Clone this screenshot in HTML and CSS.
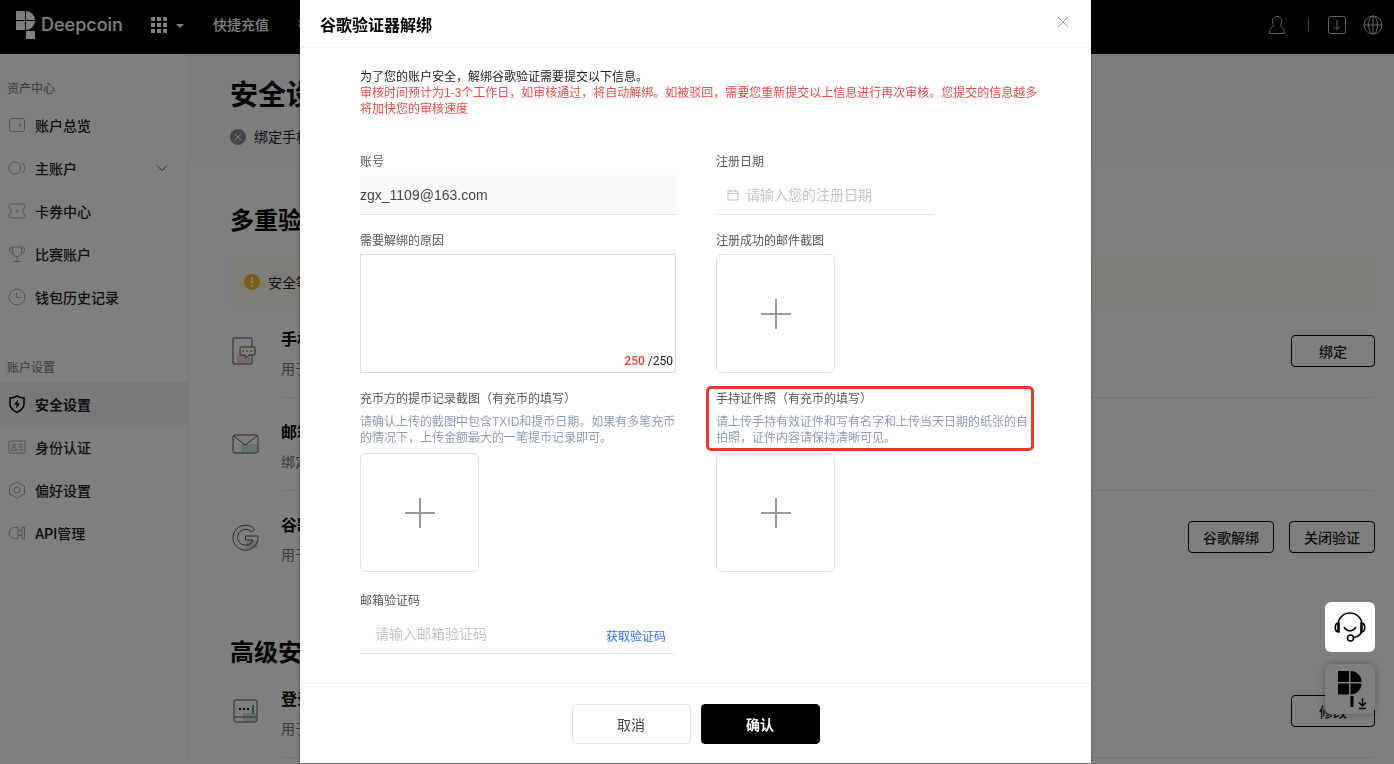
FILE: index.html
```html
<!DOCTYPE html>
<html lang="zh-CN">
<head>
  <meta charset="UTF-8">
  <meta name="viewport" content="width=device-width, initial-scale=1.0">
  <title>谷歌验证器解绑</title>
  <link rel="stylesheet" href="styles.css">
</head>
<body>
  <header class="topbar">
    <a class="logo" href="#">
      <svg width="20" height="30" viewBox="0 0 20 30" fill="currentColor">
        <path d="M0 1h9v9H0zM10 1a9 9 0 0 1 9 9h-9zM0 11h9v9H0zM10 11h9a9 9 0 0 1-9 9zM10 21h9v8h-9z"/>
      </svg>
      <span>Deepcoin</span>
    </a>
    <button class="apps" aria-label="apps">
      <svg width="33" height="16" viewBox="0 0 33 16" fill="currentColor">
        <path d="M0 0h4v4H0zM6 0h4v4H6zM12 0h4v4h-4zM0 6h4v4H0zM6 6h4v4H6zM12 6h4v4h-4zM0 12h4v4H0zM6 12h4v4H6zM12 12h4v4h-4zM25 7h8l-4 4z"/>
      </svg>
    </button>
    <nav class="topnav">
      <a href="#">快捷充值</a>
      <a href="#">行情</a>
    </nav>
    <div class="tools">
      <button aria-label="user">
        <svg width="18" height="20" viewBox="0 0 18 20"><path d="M6 10.500C3 7 4 1.500 9 1.500S15 7 12 10.500c3 1.500 4.500 4 4.500 8h-15c0-4 1.500-6.500 4.500-8z"/></svg>
      </button>
      <i class="bar"></i>
      <button aria-label="download">
        <svg width="20" height="20" viewBox="0 0 20 20"><rect x="1.500" y="1.500" width="17" height="17" rx="2"/><path d="M10 5v9.500M6.500 11l3.500 3.500 3.500-3.500"/></svg>
      </button>
      <button aria-label="language">
        <svg width="20" height="20" viewBox="0 0 20 20"><circle cx="10" cy="10" r="9"/><ellipse cx="10" cy="10" rx="4.500" ry="9"/><path d="M1 10h18M10 1v18"/></svg>
      </button>
    </div>
  </header>

  <div class="layout">
    <aside class="sidebar">
      <h4>资产中心</h4>
      <a href="#">
        <svg width="18" height="18" viewBox="0 0 18 18"><rect x="1.500" y="2.500" width="15" height="13" rx="2"/><circle cx="12" cy="9" r="1"/></svg>
        账户总览
      </a>
      <a href="#">
        <svg width="18" height="18" viewBox="0 0 18 18"><circle cx="7" cy="9" r="6"/><path d="M14 3.500c3.500 3 3.500 8 0 11"/></svg>
        主账户
        <svg class="arrow" width="12" height="8" viewBox="0 0 12 8"><path d="M1 1.500l5 5 5-5"/></svg>
      </a>
      <a href="#">
        <svg width="18" height="18" viewBox="0 0 18 18"><path d="M2.500 2h13c1 0 1.500.5 1.500 1.500v2c-3 1.500-3 5.500 0 7v2c0 1-.5 1.500-1.500 1.500h-13C1.500 16 1 15.500 1 14.500v-2c3-1.500 3-5.500 0-7v-2C1 2.500 1.500 2 2.500 2z"/><circle cx="9" cy="9" r="1"/></svg>
        卡券中心
      </a>
      <a href="#">
        <svg width="18" height="18" viewBox="0 0 18 18"><path d="M4.500 2h9v5c0 6-9 6-9 0zM4.500 3H1.500c0 3 .5 5 3.500 5.500M13.500 3h3c0 3-.5 5-3.500 5.500M9 12v4.500M5 16.500h8"/></svg>
        比赛账户
      </a>
      <a href="#">
        <svg width="18" height="18" viewBox="0 0 18 18"><circle cx="9" cy="9" r="8"/><path d="M8.500 4.500v5h5"/></svg>
        钱包历史记录
      </a>
      <h4 class="second">账户设置</h4>
      <a class="active" href="#">
        <svg width="18" height="18" viewBox="0 0 18 18"><path d="M9 1c2.500 1.500 4.500 2 7 2v6c0 4-3 6.500-7 8.500C5 15.500 2 13 2 9V3c2.500 0 4.500-.5 7-2z"/><path class="bolt" d="M10 4.500L6 9.500h2.500L8 13.500l4-5H9.500z"/></svg>
        安全设置
      </a>
      <a href="#">
        <svg width="18" height="18" viewBox="0 0 18 18"><rect x="1" y="3" width="16" height="12" rx="1"/><circle cx="6" cy="7.500" r="1.500"/><path d="M3.500 12.500c0-4 5-4 5 0zM10.500 6.500H15M10.500 9H15M10.500 11.500H15"/></svg>
        身份认证
      </a>
      <a href="#">
        <svg width="18" height="18" viewBox="0 0 18 18"><path d="M9 1l7.500 4v8L9 17l-7.500-4V5z"/><circle cx="9" cy="9" r="3"/></svg>
        偏好设置
      </a>
      <a href="#">
        <svg width="18" height="18" viewBox="0 0 18 18"><path d="M10 3.500H6.500a5.500 5.500 0 0 0 0 11H10zM1 9h1M10 6.500h3M10 11.500h3M14 3h2.500v12H14z"/></svg>
        API管理
      </a>
    </aside>

    <main class="content">
      <section class="hero">
        <h1>安全设置</h1>
        <p>
          <svg width="16" height="16" viewBox="0 0 16 16"><circle cx="8" cy="8" r="8" fill="#8c8c8c" stroke="none"/><path d="M5 5l6 6M11 5l-6 6" stroke="#fff"/></svg>
          绑定手机
        </p>
      </section>

      <section class="group">
        <h2>多重验证</h2>
        <div class="alert">
          <svg width="16" height="16" viewBox="0 0 16 16"><circle cx="8" cy="8" r="8" fill="#f5c02c" stroke="none"/><path d="M8 3v6.500M8 11v2" stroke="#fff" stroke-width="1.600"/></svg>
          安全等级
        </div>
        <div class="method">
          <svg class="pic" width="28" height="30" viewBox="0 0 28 30"><path d="M6 18h13v9H6z" fill="#f3d5c3" stroke="none"/><rect x="2" y="2" width="19" height="26" rx="1"/><path d="M10 11h13a1 1 0 0 1 1 1v6a1 1 0 0 1-1 1h-5l-3 3-1-3h-4a1 1 0 0 1-1-1v-6a1 1 0 0 1 1-1z" fill="#fff"/><path d="M11 14h2v2h-2zM15 14h2v2h-2zM19 14h2v2h-2z" fill="#f5a623" stroke="none"/></svg>
          <div class="text">
            <h3>手机验证</h3>
            <p>用于登录</p>
          </div>
          <div class="line-actions"><button>绑定</button></div>
        </div>
        <div class="method">
          <svg class="pic" width="28" height="30" viewBox="0 0 28 30"><path d="M10 15h16v8H10z" fill="#cfe5da" stroke="none"/><rect x="2" y="6" width="25" height="18" rx="2"/><path d="M3 7l11 9L26 7"/></svg>
          <div class="text">
            <h3>邮箱验证</h3>
            <p>绑定邮箱</p>
          </div>
        </div>
        <div class="method last">
          <svg class="pic" width="28" height="30" viewBox="0 0 28 30"><path d="M15 19h12v7H15z" fill="#c5dcf5" stroke="none"/><path d="M23.500 7A12.500 12.500 0 1 0 27 15.500V14H14.500v4h7.500a8 8 0 1 1-1.500-8z"/></svg>
          <div class="text">
            <h3>谷歌验证</h3>
            <p>用于登录</p>
          </div>
          <div class="line-actions"><button>谷歌解绑</button><button>关闭验证</button></div>
        </div>
      </section>

      <section class="group advanced">
        <h2>高级安全</h2>
        <div class="method">
          <svg class="pic" width="28" height="30" viewBox="0 0 28 30"><path d="M12 17h13v8H12z" fill="#c9e3d1" stroke="none"/><rect x="3" y="4" width="23" height="22" rx="2"/><path d="M3 21h23"/><path d="M8 13h2M12 13h2M16 13h2" stroke="#111" stroke-width="2"/><path d="M22 9v9" stroke="#4fae78" stroke-width="2"/></svg>
          <div class="text">
            <h3>登录密码</h3>
            <p>用于登录</p>
          </div>
          <div class="line-actions"><button>修改</button></div>
        </div>
      </section>
    </main>
  </div>

  <button class="float app-download" aria-label="app">
    <svg width="50" height="50" viewBox="0 0 50 50"><path d="M13 7h11v11H13zM25.500 7A11 11 0 0 1 36.500 18h-11zM13 19.500h11v11H13zM25.500 19.500h11a11 11 0 0 1-11 11zM25.500 32h3v11h-3z"/><rect x="29" y="31" width="17" height="17" rx="3" fill="#fff"/><path d="M37.500 34v7M34 38.500l3.500 3.500 3.500-3.500M34 44.500h7" fill="none" stroke="#000" stroke-width="1.500"/></svg>
  </button>

  <div class="overlay">
    <div class="modal" role="dialog" aria-labelledby="modal-title">
      <div class="modal-header">
        <h2 id="modal-title">谷歌验证器解绑</h2>
        <button class="close" aria-label="close">
          <svg width="12" height="12" viewBox="0 0 12 12"><path d="M1 1l10 10M11 1L1 11"/></svg>
        </button>
      </div>

      <form class="modal-body">
        <div class="intro">
          <p>为了您的账户安全，解绑谷歌验证需要提交以下信息。</p>
          <p class="warn">审核时间预计为1-3个工作日，如审核通过，将自动解绑。如被驳回，需要您重新提交以上信息进行再次审核。您提交的信息越多将加快您的审核速度</p>
        </div>

        <div class="columns">
          <div class="column">
            <div class="field">
              <label for="account">账号</label>
              <input class="line filled" id="account" type="text" value="zgx_1109@163.com" readonly>
            </div>
            <div class="field">
              <label for="reason">需要解绑的原因</label>
              <div class="area">
                <textarea id="reason"></textarea>
                <span class="count"><b>250</b> /250</span>
              </div>
            </div>
            <div class="field">
              <label for="record">充币方的提币记录截图（有充币的填写）</label>
              <p class="help">请确认上传的截图中包含TXID和提币日期。如果有多笔充币的情况下，上传金额最大的一笔提币记录即可。</p>
              <button class="upload" id="record" type="button"><svg width="32" height="32" viewBox="0 0 32 32"><path d="M16 1v30M1 16h30"/></svg></button>
            </div>
            <div class="field verify">
              <label for="code">邮箱验证码</label>
              <div class="line code">
                <input id="code" type="text" placeholder="请输入邮箱验证码">
                <button type="button">获取验证码</button>
              </div>
            </div>
          </div>

          <div class="column">
            <div class="field">
              <label for="date">注册日期</label>
              <div class="line date">
                <svg width="12" height="12" viewBox="0 0 12 12"><rect x="1" y="2" width="10" height="9"/><path d="M1 4.500h10M3.500 1v2M8.500 1v2"/></svg>
                <input id="date" type="text" placeholder="请输入您的注册日期">
              </div>
            </div>
            <div class="field">
              <label for="mail">注册成功的邮件截图</label>
              <button class="upload" id="mail" type="button"><svg width="32" height="32" viewBox="0 0 32 32"><path d="M16 1v30M1 16h30"/></svg></button>
            </div>
            <div class="field">
              <div class="highlight">
                <label for="photo">手持证件照（有充币的填写）</label>
                <p class="help">请上传手持有效证件和写有名字和上传当天日期的纸张的自拍照，证件内容请保持清晰可见。</p>
              </div>
              <button class="upload" id="photo" type="button"><svg width="32" height="32" viewBox="0 0 32 32"><path d="M16 1v30M1 16h30"/></svg></button>
            </div>
          </div>
        </div>
      </form>

      <div class="modal-footer">
        <button class="cancel">取消</button>
        <button class="confirm">确认</button>
      </div>
    </div>
  </div>

  <button class="float service" aria-label="service">
    <svg width="36" height="34" viewBox="0 0 36 34"><path d="M6 22V15a12 12 0 0 1 24 0v4c0 6-4 8-9 9"/><path d="M7 13c-5 0-5 9 0 9zM29 13c5 0 5 9 0 9z"/><path d="M12 17c3 5 9 5 12 0"/><circle cx="18.500" cy="28" r="3"/></svg>
  </button>
</body>
</html>
```
FILE: styles.css
```css
* {
  box-sizing: border-box;
}
body {
  margin: 0;
  height: 100vh;
  overflow: hidden;
  font-family: "Liberation Sans", "Noto Sans CJK SC", sans-serif;
  font-size: 14px;
  color: #1a1c22;
  background: #fff;
}
h1, h2, h3, h4, p {
  margin: 0;
}
a {
  color: inherit;
  text-decoration: none;
}
button, input, textarea {
  font: inherit;
  color: inherit;
  margin: 0;
  padding: 0;
  border: 0;
  background: none;
}
button {
  cursor: pointer;
}
svg {
  display: block;
  flex: none;
  fill: none;
  stroke: currentColor;
}

/* Header */
.topbar {
  display: flex;
  align-items: center;
  height: 54px;
  padding: 0 11px 4px 16px;
  background: #000;
  color: #fff;
}
.logo {
  display: flex;
  align-items: center;
  gap: 5px;
  width: 135px;
  font: 500 18px/24px Inter, sans-serif;
}
.logo svg, .apps svg {
  fill: currentColor;
  stroke: none;
}
.topnav {
  display: flex;
  gap: 29px;
  margin-left: 29px;
  font-weight: 500;
  line-height: 20px;
}
.tools {
  display: flex;
  align-items: center;
  margin-left: auto;
  gap: 16px;
  color: #c8c8c8;
}
.bar {
  width: 1px;
  height: 14px;
  margin: 0 2px 0 6px;
  background: #888;
}

/* Sidebar */
.layout {
  display: flex;
}
.sidebar {
  flex: none;
  width: 189px;
  padding-top: 25px;
  border-right: 1px solid #f2f2f2;
}
.sidebar h4 {
  padding-left: 7px;
  margin-bottom: 4px;
  font-size: 12px;
  font-weight: 400;
  line-height: 20px;
  color: #777;
}
.sidebar .second {
  margin-top: 40px;
}
.sidebar a {
  display: flex;
  align-items: center;
  gap: 9px;
  height: 43px;
  padding: 0 20px 0 8px;
  font-family: Roboto, "Noto Sans CJK SC", sans-serif;
  font-weight: 500;
}
.sidebar svg {
  color: #aaa;
}
.sidebar .arrow {
  margin-left: auto;
  color: #555;
}
.sidebar .active {
  font-weight: 700;
  background: #f2f2f2;
}
.sidebar .active svg {
  color: #000;
  stroke-width: 1.500;
}
.sidebar .bolt {
  fill: #000;
  stroke: none;
}

/* Page content */
.content {
  flex: 1;
}
.hero {
  height: 111px;
  padding: 22px 0 0 41px;
  background: #fafafa;
}
.hero h1 {
  font-size: 28px;
  line-height: 40px;
  color: #000;
}
.hero p {
  display: flex;
  align-items: center;
  gap: 8px;
  margin-top: 11px;
  line-height: 20px;
}
.group {
  padding: 44px 19px 0 41px;
}
.group h2 {
  font-size: 24px;
  line-height: 24px;
  color: #000;
}
.alert {
  display: flex;
  align-items: center;
  gap: 8px;
  height: 47px;
  margin-top: 25px;
  padding-left: 14px;
  background: #fffaf0;
}
.method {
  display: flex;
  align-items: flex-start;
  position: relative;
  height: 93px;
  padding-top: 23px;
}
.method::after {
  content: "";
  position: absolute;
  left: 51px;
  right: 0;
  bottom: 0;
  border-bottom: 1px solid #ebebeb;
}
.method.last::after {
  display: none;
}
.pic {
  margin: 8px 22px 0 1px;
  color: #555;
}
.method h3 {
  font-size: 16px;
  line-height: 24px;
  color: #000;
}
.method p {
  margin-top: 7px;
  line-height: 20px;
  color: #777;
}
.line-actions {
  display: flex;
  gap: 15px;
  margin: 7px 0 0 auto;
}
.line-actions button {
  min-width: 84px;
  height: 32px;
  padding: 0 14px;
  border: 1px solid #000;
  border-radius: 4px;
  font-weight: 500;
}
.advanced {
  padding-top: 57px;
}

/* Floating buttons */
.float {
  position: fixed;
  right: 19px;
  width: 50px;
  height: 50px;
  border-radius: 6px;
  background: #fff;
}
.app-download {
  bottom: 50px;
  box-shadow: 0 0 8px rgba(0, 0, 0, 0.3);
}
.app-download svg {
  fill: #000;
  stroke: none;
}
.service {
  bottom: 112px;
  display: flex;
  align-items: center;
  justify-content: center;
  color: #000;
}
.service svg {
  stroke-width: 1.600;
}

/* Modal */
.overlay {
  position: fixed;
  inset: 0;
  display: flex;
  justify-content: center;
  align-items: flex-start;
  padding-right: 3px;
  background: rgba(0, 0, 0, 0.5);
}
.modal {
  width: 791px;
  max-width: 100%;
  background: #fff;
  box-shadow: 0 0 3px rgba(0, 0, 0, 0.4);
}
.modal-header {
  display: flex;
  justify-content: space-between;
  padding: 14px 22px 9px 20px;
  border-bottom: 1px solid #f0f0f0;
}
.modal-header h2 {
  font-size: 16px;
  line-height: 24px;
  color: #000;
}
.close {
  height: 16px;
  color: #999;
}
.modal-body {
  padding: 21px 49px 29px 60px;
  font-size: 12px;
  line-height: 16px;
}
.warn {
  color: #ec4b45;
}
.columns {
  display: grid;
  grid-template-columns: 1fr 1fr;
  gap: 40px;
  max-width: 672px;
  margin-top: 37px;
}
.column {
  display: flex;
  flex-direction: column;
  gap: 18px;
}
.field label {
  display: block;
  margin-bottom: 5px;
  color: #54565b;
}
.verify {
  margin-top: 3px;
}
.line {
  display: flex;
  align-items: center;
  width: 100%;
  height: 40px;
  border-bottom: 1px solid #dfe5ec;
  font-size: 14px;
}
.line input {
  flex: 1;
  min-width: 0;
}
.filled {
  background: #fafafa;
  color: #444;
}
.date {
  width: 218px;
  padding-left: 11px;
  gap: 7px;
  color: #c0c4cc;
}
.code {
  padding: 0 10px 0 15px;
}
.code button {
  align-self: flex-end;
  padding-bottom: 8px;
  font-size: 12px;
  line-height: 16px;
  color: #2d6ff5;
}
::placeholder {
  color: #c0c4cc;
  opacity: 1;
}
.area {
  position: relative;
  height: 119px;
}
.area textarea {
  display: block;
  width: 100%;
  height: 100%;
  border: 1px solid #d5dce6;
  resize: none;
}
.count {
  position: absolute;
  right: 3px;
  bottom: 4px;
  font-family: Roboto, sans-serif;
}
.count b {
  font-weight: 500;
  color: #ec3b35;
}
.help {
  padding-top: 2px;
  margin-bottom: 7px;
  color: #8d9bb3;
}
.upload {
  display: flex;
  align-items: center;
  justify-content: center;
  width: 119px;
  height: 119px;
  border: 1px solid #e2e2e2;
  border-radius: 6px;
  color: #999;
}
.upload svg {
  stroke-width: 2;
}
.highlight {
  position: relative;
}
.highlight::after {
  content: "";
  position: absolute;
  inset: -5px -2px -5px -10px;
  border: 3px solid #e8392a;
  border-radius: 5px;
  pointer-events: none;
}
.modal-footer {
  display: flex;
  justify-content: center;
  gap: 10px;
  padding: 20px 0 19px;
  border-top: 1px solid #eceff3;
}
.modal-footer button {
  width: 119px;
  height: 40px;
  border: 1px solid #e2e5ea;
  border-radius: 4px;
  color: #444;
}
.modal-footer .confirm {
  border-color: #000;
  background: #000;
  color: #fff;
  font-weight: 700;
}
```
